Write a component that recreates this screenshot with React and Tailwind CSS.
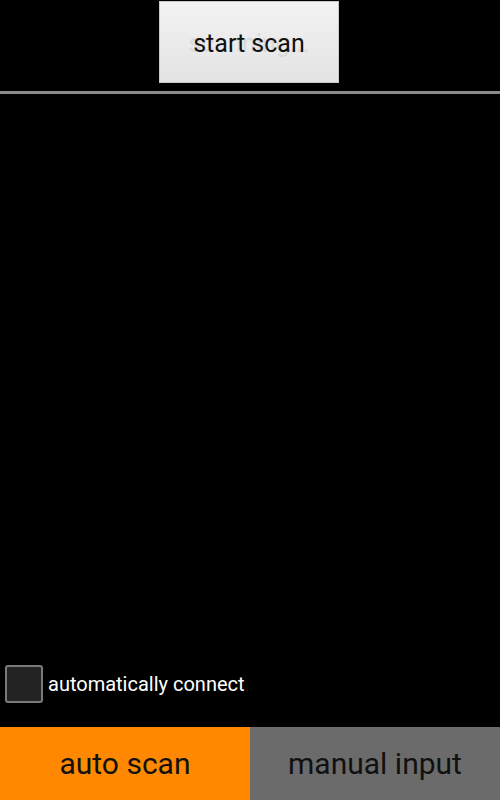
export default function App() {
  return (
    <div className="flex h-[800px] w-[500px] flex-col bg-black font-['Roboto',sans-serif]">
      {/* Top: scan button + divider */}
      <div className="flex justify-center pt-px">
        <button
          type="button"
          className="relative ml-[-2px] flex h-[82px] w-[180px] items-center justify-center border border-[#c8c8c8] bg-gradient-to-b from-[#f2f2f2] to-[#e4e4e4] pt-[4px] text-[25px] text-[#111]"
        >
          <span className="absolute inset-0 flex items-center justify-center pt-[4px] text-[#dadada]">scanning...</span>
          <span className="relative">start scan</span>
        </button>
      </div>
      <div className="mt-[8px] h-[3px] w-full bg-[#8a8a8a]" />

      {/* Empty list area */}
      <div className="flex-1" />

      {/* Checkbox row */}
      <label className="flex items-center gap-[5px] pl-[5px]">
        <span className="h-[38px] w-[38px] rounded-[3px] border-2 border-[#7a7a7a] bg-[#232323]" />
        <span className="text-[20px] text-white">automatically connect</span>
      </label>
      <div className="h-[24px]" />

      {/* Bottom tabs */}
      <div className="flex h-[73px]">
        <button type="button" className="flex w-[250px] items-center justify-center bg-[#ff8800] text-[30px] text-[#111]">
          auto scan
        </button>
        <button type="button" className="flex w-[250px] items-center justify-center bg-[#6b6b6b] text-[30px] text-[#111]">
          manual input
        </button>
      </div>
    </div>
  )
}
